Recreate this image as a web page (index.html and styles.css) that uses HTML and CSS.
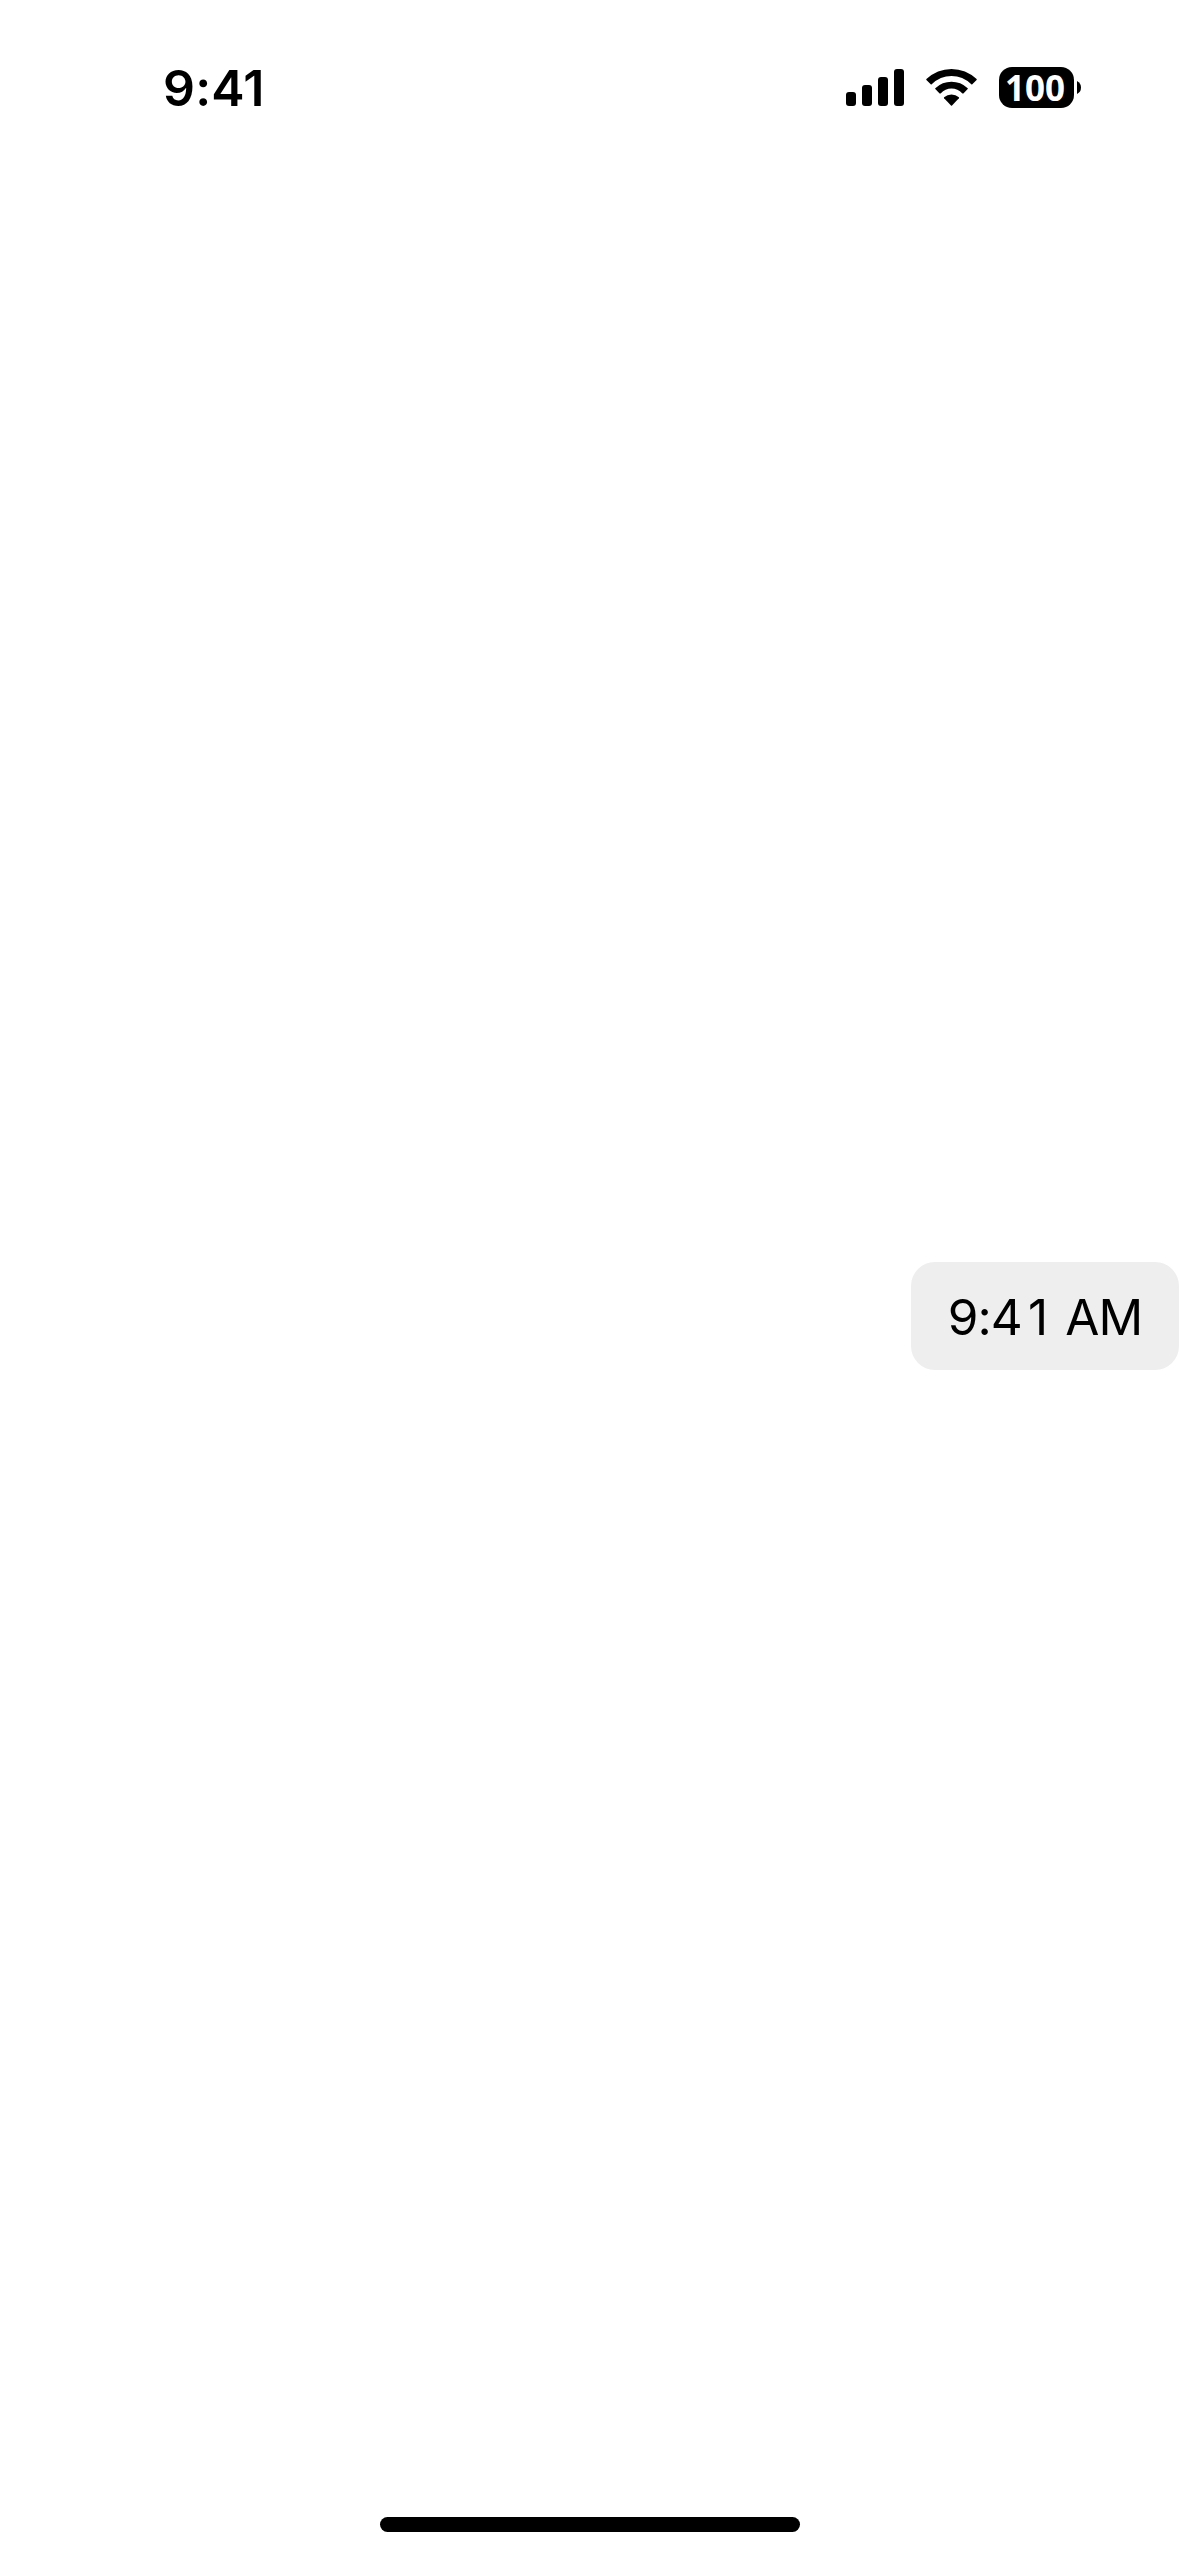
FILE: index.html
```
<!DOCTYPE html>
<html lang="en">
<head>
<meta charset="utf-8">
<meta name="viewport" content="width=device-width">
<title>Time</title>
<link rel="stylesheet" href="styles.css">
</head>
<body>
<div class="screen">
  <header class="status-bar">
    <span class="clock">9:41</span>
    <div class="indicators">
      <svg class="signal" viewBox="0 0 58 37" aria-hidden="true">
        <rect x="0" y="23" width="10" height="14" rx="3"/>
        <rect x="16" y="16" width="10" height="21" rx="3"/>
        <rect x="32" y="8" width="10" height="29" rx="3"/>
        <rect x="48" y="0" width="10" height="37" rx="3"/>
      </svg>
      <svg class="wifi" viewBox="0 0 51 37" aria-hidden="true">
        <path d="M.4 10.1Q11.2 0 25.5 0T50.6 10.1Q51 10.6 50.6 11L46.3 15.2Q45.8 15.6 45.3 15.2Q36.8 7 25.5 7T5.7 15.2Q5.2 15.6 4.7 15.2L.4 11Q0 10.6.4 10.1Z"/>
        <path d="M9.3 19.2Q16.3 12.8 25.5 12.8T41.7 19.2Q42.1 19.7 41.7 20.1L37.4 24.4Q36.9 24.8 36.4 24.4Q31.7 19.6 25.5 19.6T14.6 24.4Q14.1 24.8 13.6 24.4L9.3 20.1Q8.9 19.7 9.3 19.2Z"/>
        <path d="M18.1 28.3Q21.3 25.5 25.5 25.5T32.9 28.3Q33.3 28.8 32.9 29.3L26 36.5Q25.5 37 25 36.5L18.1 29.3Q17.7 28.8 18.1 28.3Z"/>
      </svg>
      <div class="battery">
        <span class="battery-level">100</span>
        <svg class="battery-tip" viewBox="0 0 4 13" aria-hidden="true"><path d="M0 0Q4 2 4 6.5T0 13Z"/></svg>
      </div>
    </div>
  </header>
  <main class="content">
    <button class="time-chip" type="button">9:4<span class="narrow-digit">1</span> AM</button>
  </main>
  <footer class="home-area"><div class="home-indicator"></div></footer>
</div>
</body>
</html>
```
FILE: styles.css
```
* {
  box-sizing: border-box;
}

body {
  margin: 0;
  background: #fff;
  color: #000;
  font-family: Inter, "Liberation Sans", sans-serif;
}

.screen {
  display: flex;
  flex-direction: column;
  height: 2556px;
}

.status-bar {
  display: flex;
  align-items: center;
  justify-content: space-between;
  height: 177px;
  padding: 0 98px 2px 163px;
}

.clock {
  font-size: 50px;
  font-weight: 600;
  letter-spacing: 0.2px;
  line-height: 60px;
  white-space: nowrap;
}

.indicators,
.battery {
  display: flex;
  align-items: center;
}

.signal {
  width: 58px;
  height: 37px;
  margin-right: 22px;
}

.wifi {
  width: 51px;
  height: 37px;
  margin-right: 22px;
}

.battery {
  gap: 3px;
}

.battery-level {
  width: 75px;
  height: 41px;
  padding-right: 3px;
  border-radius: 13px;
  background: #000;
  color: #fff;
  font-family: "Noto Sans", "Open Sans", sans-serif;
  font-size: 35px;
  font-weight: 700;
  line-height: 41px;
  text-align: center;
}

.battery-tip {
  width: 4px;
  height: 13px;
}

.content {
  display: flex;
  flex: 1;
  align-items: center;
  justify-content: flex-end;
  padding-top: 1px;
}

.time-chip {
  width: 268px;
  height: 108px;
  padding: 2px 0 0;
  border: 0;
  border-radius: 24px;
  background: #eee;
  color: #000;
  font: 400 49.5px/60px Inter, "Liberation Sans", sans-serif;
  letter-spacing: -0.9px;
  white-space: nowrap;
}

/* Gives the 1 the same advance as the wider digits. */
.narrow-digit {
  margin: 0 5px 0 6px;
}

.home-area {
  display: flex;
  justify-content: center;
  height: 102px;
  padding-top: 63px;
}

.home-indicator {
  width: 420px;
  height: 15px;
  border-radius: 8px;
  background: #000;
}
```
